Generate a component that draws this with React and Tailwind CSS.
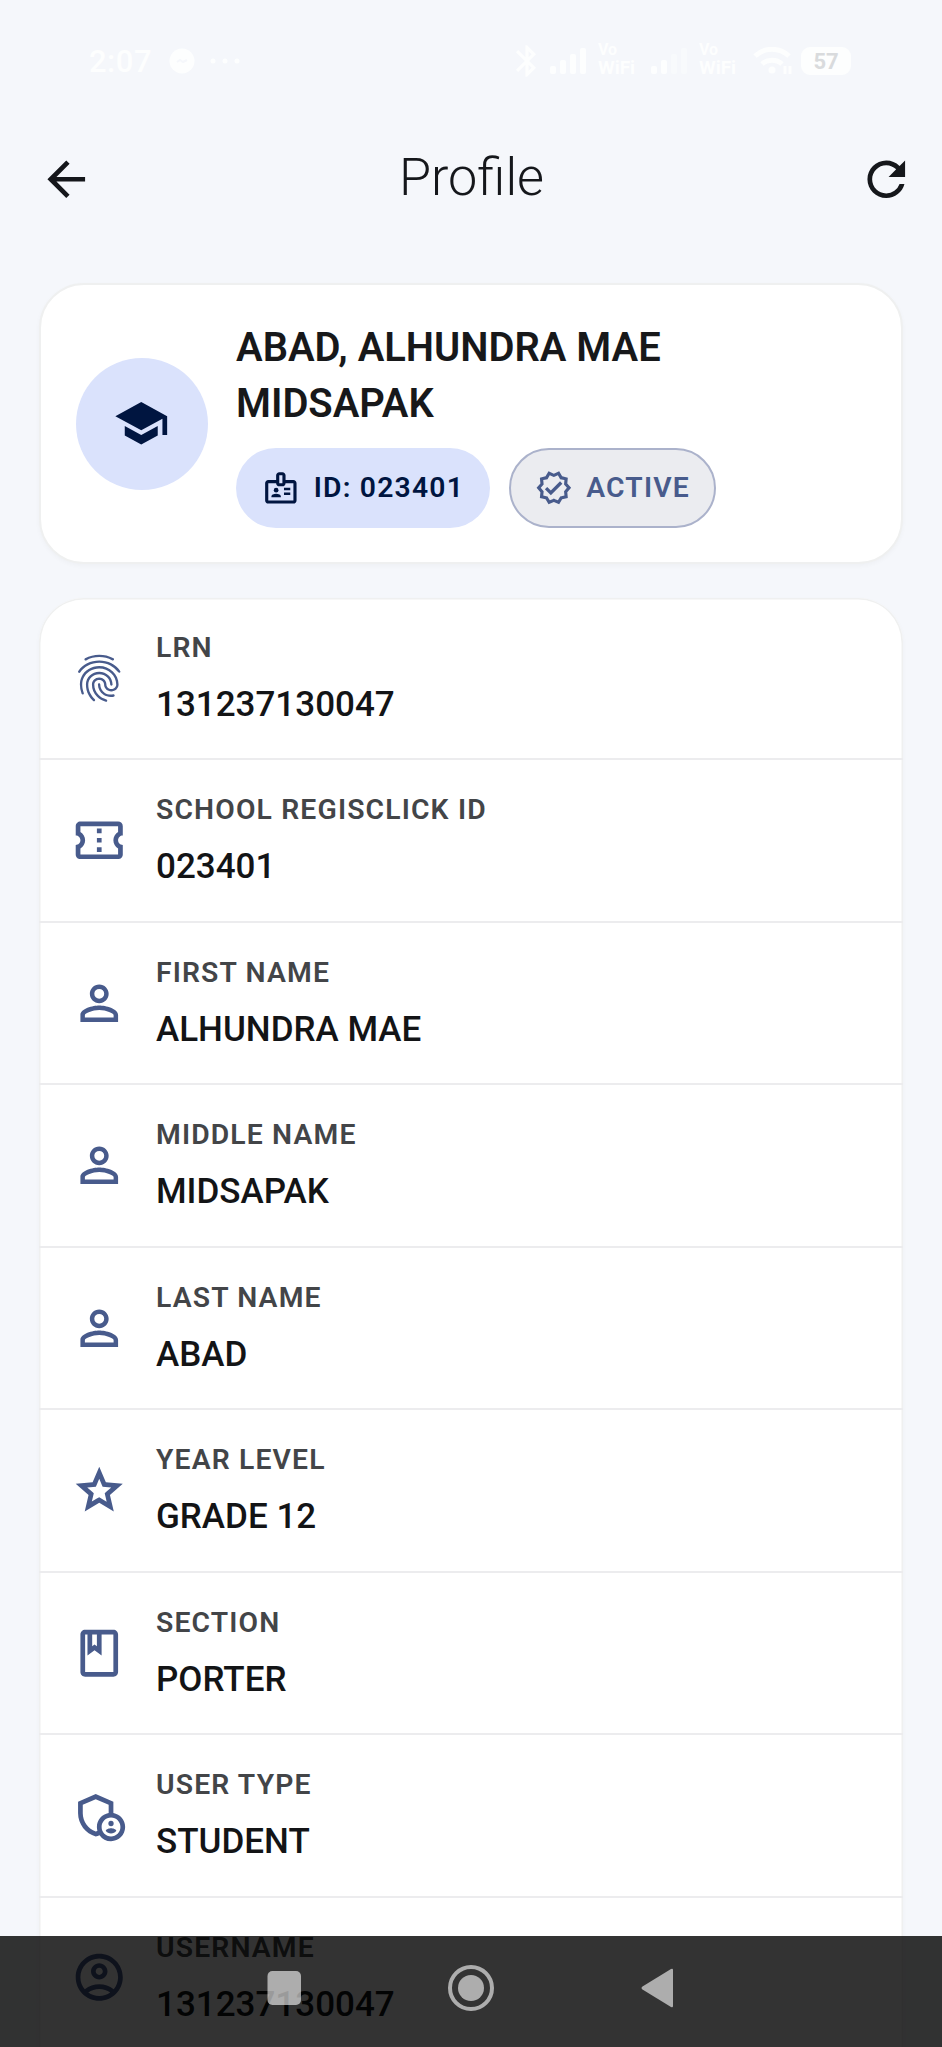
import {
    MdArrowBack,
    MdBluetooth,
    MdFingerprint,
    MdOutlineAccountCircle,
    MdOutlineAdminPanelSettings,
    MdOutlineBadge,
    MdOutlineClass,
    MdOutlineConfirmationNumber,
    MdOutlineGrade,
    MdOutlineVerified,
    MdPersonOutline,
    MdRefresh,
    MdSchool,
} from "react-icons/md";

const fields = [
    { label: "LRN", value: "131237130047", icon: MdFingerprint },
    { label: "SCHOOL REGISCLICK ID", value: "023401", icon: MdOutlineConfirmationNumber },
    { label: "FIRST NAME", value: "ALHUNDRA MAE", icon: MdPersonOutline },
    { label: "MIDDLE NAME", value: "MIDSAPAK", icon: MdPersonOutline },
    { label: "LAST NAME", value: "ABAD", icon: MdPersonOutline },
    { label: "YEAR LEVEL", value: "GRADE 12", icon: MdOutlineGrade },
    { label: "SECTION", value: "PORTER", icon: MdOutlineClass },
    { label: "USER TYPE", value: "STUDENT", icon: MdOutlineAdminPanelSettings },
    { label: "USERNAME", value: "131237130047", icon: MdOutlineAccountCircle },
];

function Signal({ weak = false }) {
    return (
        <svg width="38" height="28" viewBox="0 0 38 28" fill="currentColor">
            <rect x="0" y="19" width="6" height="8" rx="2" />
            <rect x="10" y="13" width="6" height="14" rx="2" />
            <rect x="20" y="7" width="6" height="20" rx="2" opacity={weak ? 0.4 : 1} />
            <rect x="30" y="1" width="6" height="26" rx="2" opacity={weak ? 0.4 : 1} />
        </svg>
    );
}

function VoWifi() {
    return (
        <div className="w-[44px] pb-[4px] font-bold">
            <div className="h-[17px] text-[16px] leading-[17px]">Vo</div>
            <div className="h-[20px] text-[19px] leading-[20px]">WiFi</div>
        </div>
    );
}

function StatusBar() {
    return (
        <div className="flex h-[122px] items-center justify-between pr-[91px] pl-[89px] text-[#fdfefe]">
            <div className="flex items-center">
                <span className="text-[31px] leading-none font-medium tracking-[0.5px]">2:07</span>
                <svg className="ml-[17px]" width="26" height="26" viewBox="0 0 26 26">
                    <circle cx="13" cy="13" r="12.5" fill="currentColor" />
                    <path d="M8 14l3-2 3 2 4-2" fill="none" stroke="#f5f7fb" strokeWidth="2" />
                </svg>
                <svg className="ml-[15px]" width="30" height="6" viewBox="0 0 30 6" fill="currentColor">
                    <circle cx="3" cy="3" r="2.5" />
                    <circle cx="15" cy="3" r="2.5" />
                    <circle cx="27" cy="3" r="2.5" />
                </svg>
            </div>
            <div className="flex items-center">
                <MdBluetooth className="mr-[4px] size-[38px]" />
                <Signal />
                <div className="ml-[10px]">
                    <VoWifi />
                </div>
                <div className="ml-[9px]">
                    <Signal weak />
                </div>
                <div className="ml-[10px]">
                    <VoWifi />
                </div>
                <svg className="ml-[10px]" width="40" height="28" viewBox="0 0 40 28" fill="none">
                    <path d="M2 9a25 25 0 0 1 34 0M9 17a15 15 0 0 1 20 0" stroke="currentColor" strokeWidth="5" />
                    <circle cx="19" cy="23" r="3.5" fill="currentColor" />
                    <path d="M32 19v8M37 19v8" stroke="currentColor" strokeWidth="3" />
                </svg>
                <div className="ml-[8px] flex h-[28px] w-[50px] items-center justify-center rounded-[9px] bg-[#fdfefe] text-[22px] font-bold text-[#d9dbdd]">
                    57
                </div>
            </div>
        </div>
    );
}

function AppBar() {
    return (
        <header className="flex h-[114px] items-center justify-between pr-[27px] pl-[38px] text-[#15171b]">
            <MdArrowBack className="size-[56.5px]" />
            <h1 className="pr-[10px] pb-[3px] text-[52.2px] leading-[60px] font-light">Profile</h1>
            <MdRefresh className="size-[56.5px]" />
        </header>
    );
}

function ProfileCard() {
    return (
        <section className="flex h-[281px] items-center gap-[28.5px] rounded-[45px] border-2 border-[#eff0f0] bg-white px-[34.5px] shadow-[0_2px_5px_rgba(0,0,0,0.03)]">
            <div className="flex size-[132px] shrink-0 items-center justify-center rounded-full bg-[#dae2fc]">
                <MdSchool className="size-[56.5px] text-[#001540]" />
            </div>
            <div className="w-[480px]">
                <h2 className="pt-px text-[39.9px] leading-[56.5px] font-semibold text-[#17181a]">
                    ABAD, ALHUNDRA MAE MIDSAPAK
                </h2>
                <div className="mt-[15.5px] flex gap-[19px] text-[28.3px] font-semibold tracking-[1.2px]">
                    <span className="flex h-[80px] w-[253.5px] items-center rounded-[40px] bg-[#dae2fc] pl-[26px] whitespace-nowrap text-[#001540]">
                        <MdOutlineBadge className="mr-[14px] size-[37.7px]" />
                        ID: 023401
                    </span>
                    <span className="flex h-[80px] w-[207.5px] items-center rounded-[40px] border-2 border-[#abb2cb] bg-[#ebecf0] pl-[24px] whitespace-nowrap text-[#485b8c]">
                        <MdOutlineVerified className="mr-[14px] size-[37.7px]" />
                        ACTIVE
                    </span>
                </div>
            </div>
        </section>
    );
}

function FieldRow({ label, value, icon: Icon }) {
    return (
        <li className="flex h-[162.45px] items-center gap-[29px] border-b-2 border-[#ececee] pl-[31.5px]">
            <Icon className="size-[56.5px] text-[#485b8c]" />
            <div className="pt-[2px]">
                <div className="text-[28.3px] leading-[40px] font-semibold tracking-[1.15px] text-[#434548]">
                    {label}
                </div>
                <div className="mt-[11px] text-[35px] leading-[51.4px] font-medium text-[#131416]">
                    {value}
                </div>
            </div>
        </li>
    );
}

function NavBar() {
    return (
        <nav className="absolute inset-x-0 bottom-0 h-[111px] bg-black/80">
            <svg width="942" height="111" viewBox="0 0 942 111" fill="#fff" fillOpacity="0.6">
                <rect x="267.5" y="35" width="33.5" height="34" rx="5" />
                <circle cx="471" cy="52" r="13" />
                <circle cx="471" cy="52" r="21" fill="none" stroke="#fff" strokeOpacity="0.6" strokeWidth="4" />
                <path d="M642.5 50.5L671 33q2-1 2 1v36q0 2-2 1L642.5 53.5q-2-1.500 0-3z" />
            </svg>
        </nav>
    );
}

export default function App() {
    return (
        <div className="relative h-[2047px] w-[942px] overflow-hidden bg-[#f5f7fb] font-[Roboto,sans-serif]">
            <StatusBar />
            <AppBar />
            <main className="mx-[39px] pt-[47px]">
                <ProfileCard />
                <ul className="mt-[34px] rounded-t-[45px] bg-white shadow-[inset_0_0_0_1.5px_#eff0f0,0_2px_5px_rgba(0,0,0,0.03)]">
                    {fields.map((f) => (
                        <FieldRow key={f.label} {...f} />
                    ))}
                </ul>
            </main>
            <NavBar />
        </div>
    );
}
